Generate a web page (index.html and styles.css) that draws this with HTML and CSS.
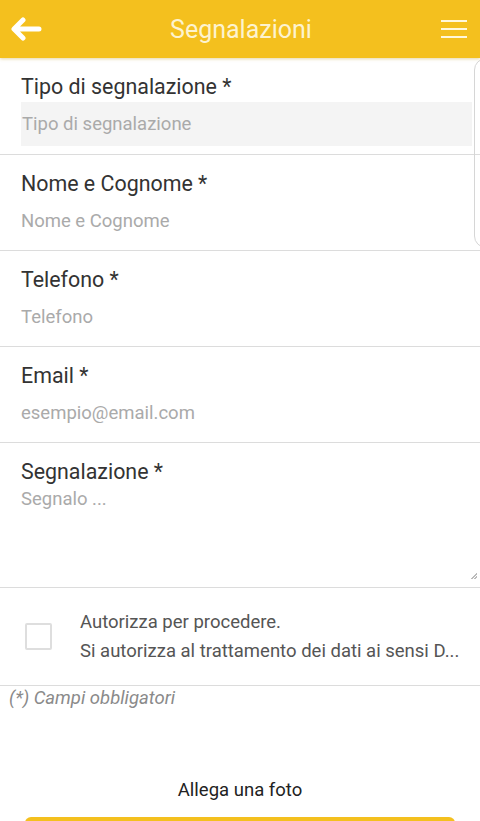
FILE: index.html
```html
<!DOCTYPE html>
<html lang="it">
<head>
<meta charset="utf-8">
<title>Segnalazioni</title>
<link rel="stylesheet" href="styles.css">
</head>
<body>
<header class="appbar">
  <button class="icon-btn back" aria-label="Indietro">
    <svg width="32" height="24" viewBox="0 0 32 24"><path d="M13 3 L4 12 L13 21 M5 12 H29" fill="none" stroke="#fff" stroke-width="5" stroke-linecap="round" stroke-linejoin="round"/></svg>
  </button>
  <h1 class="title">Segnalazioni</h1>
  <button class="icon-btn menu" aria-label="Menu">
    <svg width="28" height="22" viewBox="0 0 28 22"><path d="M1 3 H27 M1 11 H27 M1 19 H27" stroke="#fff8dc" stroke-width="2.2"/></svg>
  </button>
</header>
<div class="edge-glow"></div>
<main class="form">
  <div class="field">
    <label class="label">Tipo di segnalazione *</label>
    <div class="input select">Tipo di segnalazione</div>
  </div>
  <div class="field">
    <label class="label">Nome e Cognome *</label>
    <div class="input">Nome e Cognome</div>
  </div>
  <div class="field">
    <label class="label">Telefono *</label>
    <div class="input">Telefono</div>
  </div>
  <div class="field">
    <label class="label">Email *</label>
    <div class="input">esempio@email.com</div>
  </div>
  <div class="field field-area">
    <label class="label">Segnalazione *</label>
    <div class="textarea">Segnalo ...<span class="grip"></span></div>
  </div>
  <div class="consent">
    <span class="checkbox"></span>
    <div class="consent-text">
      <p>Autorizza per procedere.</p>
      <p>Si autorizza al trattamento dei dati ai sensi D...</p>
    </div>
  </div>
  <p class="note">(*) Campi obbligatori</p>
  <p class="attach">Allega una foto</p>
  <div class="photo-btn"></div>
</main>
</body>
</html>
```
FILE: styles.css
```css
* { box-sizing: border-box; }
html, body { margin: 0; padding: 0; }
body {
  width: 480px;
  height: 821px;
  overflow: hidden;
  background: #fff;
  font-family: Roboto, "Noto Sans", sans-serif;
  position: relative;
}
.appbar {
  height: 58px;
  background: #f4c01e;
  display: flex;
  align-items: center;
  justify-content: space-between;
  padding: 0 12px 0 10px;
  box-shadow: 0 1px 3px rgba(180, 140, 0, 0.35);
  position: relative;
  z-index: 2;
}
.icon-btn {
  background: none;
  border: 0;
  padding: 0;
  display: flex;
  align-items: center;
}
.title {
  margin: 0;
  font-weight: 400;
  font-size: 25px;
  color: #fdf3cf;
}
.edge-glow {
  position: absolute;
  top: 58px;
  right: -10px;
  width: 16px;
  height: 190px;
  border: 1px solid #d6d6d6;
  border-radius: 12px 0 0 12px;
  z-index: 1;
}
.form { display: flex; flex-direction: column; }
.field {
  height: 96px;
  border-bottom: 1px solid #dcdcdc;
  padding: 16px 8px 0 21px;
}
.field:first-child { height: 97px; }
.label {
  display: block;
  font-size: 21.4px;
  line-height: 26px;
  color: #333;
}
.input {
  margin-top: 2px;
  height: 44px;
  display: flex;
  align-items: center;
  font-size: 18.5px;
  color: #aaa;
}
.input.select {
  background: #f4f4f4;
  padding-left: 1px;
}
.field-area {
  height: 145px;
  padding-right: 3px;
}
.textarea {
  position: relative;
  margin-top: 2px;
  height: 96px;
  font-size: 18.5px;
  color: #aaa;
  line-height: 24px;
}
.grip {
  position: absolute;
  right: 0;
  bottom: 4px;
  width: 6px;
  height: 6px;
  background: linear-gradient(135deg, transparent 50%, #bbb 50%, #bbb 60%, transparent 60%, transparent 75%, #bbb 75%, #bbb 85%, transparent 85%);
}
.consent {
  height: 98px;
  border-bottom: 1px solid #dcdcdc;
  display: flex;
  align-items: center;
  padding-left: 25px;
}
.checkbox {
  width: 27px;
  height: 27px;
  border: 2px solid #dedede;
  border-radius: 2px;
  flex: none;
}
.consent-text {
  margin-left: 28px;
  font-size: 18.5px;
  line-height: 29px;
  color: #555;
}
.consent-text p { margin: 0; }
.note {
  margin: 0;
  padding: 0 0 0 9px;
  font-size: 18.5px;
  line-height: 24px;
  font-style: italic;
  color: #8a8a8a;
}
.attach {
  margin: 68px 0 0;
  text-align: center;
  font-size: 18.5px;
  line-height: 24px;
  color: #222;
}
.photo-btn {
  margin: 15px 25px 0;
  height: 44px;
  background: #f4c01e;
  border-radius: 6px;
}
```
